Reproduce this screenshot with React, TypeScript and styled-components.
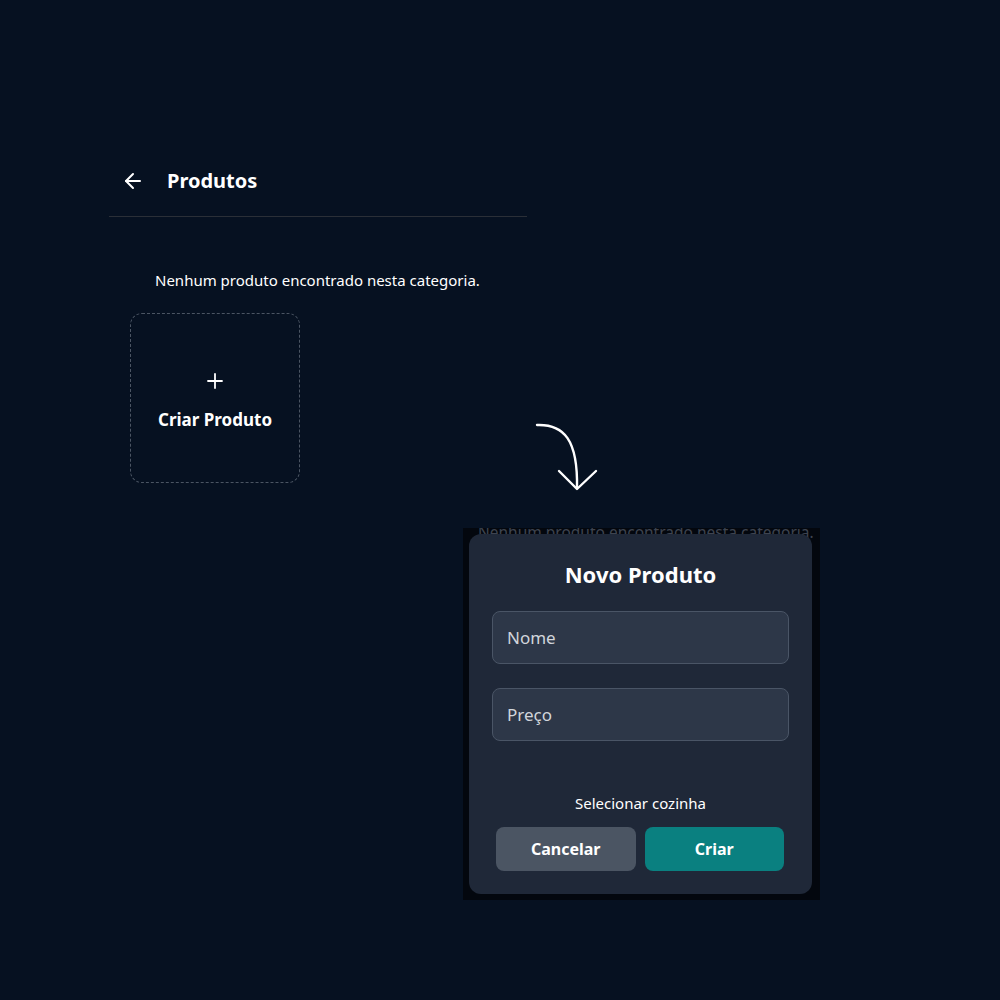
import { createGlobalStyle, styled } from 'styled-components'
import { ArrowLeft, Plus } from 'lucide-react'

const GlobalStyle = createGlobalStyle`
  html, body {
    margin: 0;
    padding: 0;
    background: #061121;
    font-family: "Noto Sans", "Open Sans", sans-serif;
    color: #ffffff;
  }
`

const Canvas = styled.div`
  position: relative;
  width: 1000px;
  height: 1000px;
  padding-top: 145px;
  box-sizing: border-box;
  overflow: hidden;
`

const Panel = styled.section`
  width: 418px;
  margin-left: 109px;
`

const Header = styled.header`
  display: flex;
  align-items: center;
  gap: 22px;
  height: 71px;
  padding-left: 12px;
  border-bottom: 1px solid #2a2f37;
`

const Title = styled.h1`
  margin: 0;
  font-size: 20px;
  font-weight: 700;
`

const Content = styled.div`
  display: flex;
  flex-direction: column;
  gap: 23px;
  padding: 53px 0 0 21px;
`

const Message = styled.p`
  margin: 0 0 0 25px;
  font-size: 15px;
  line-height: 20px;
`

const NewCard = styled.button`
  display: flex;
  flex-direction: column;
  align-items: center;
  justify-content: center;
  gap: 15px;
  width: 170px;
  height: 170px;
  padding: 3px 0 0;
  background: transparent;
  border: 1px dashed #4b5563;
  border-radius: 12px;
  color: #ffffff;
  font-family: inherit;
  font-size: 17px;
  font-weight: 700;
`

const CurvedArrow = styled.svg`
  position: absolute;
  left: 530px;
  top: 418px;
`

const Shot = styled.div`
  position: relative;
  width: 357px;
  height: 372px;
  margin: 45px 0 0 463px;
  padding: 6px 8px 6px 6px;
  box-sizing: border-box;
  background: #03070e;
  overflow: hidden;
`

const Behind = styled.p`
  position: absolute;
  top: -6px;
  left: 15px;
  margin: 0;
  white-space: nowrap;
  font-size: 15.5px;
  line-height: 20px;
  color: #3e4450;
`

const Modal = styled.div`
  position: relative;
  display: flex;
  flex-direction: column;
  height: 360px;
  padding: 26px 23px 23px;
  box-sizing: border-box;
  background: #1f2838;
  border-radius: 12px;
`

const ModalTitle = styled.h2`
  margin: 0 0 23px;
  text-align: center;
  font-size: 22px;
  line-height: 28px;
  font-weight: 700;
`

const Field = styled.div`
  display: flex;
  align-items: center;
  height: 53px;
  padding: 0 14px;
  margin-bottom: ${p => p.$gap}px;
  box-sizing: border-box;
  background: #2d3748;
  border: 1px solid #4a5566;
  border-radius: 8px;
  color: #d1d5db;
  font-size: 17px;
`

const Select = styled.div`
  text-align: center;
  font-size: 15px;
  line-height: 20px;
  margin-bottom: 14px;
`

const Actions = styled.div`
  display: flex;
  gap: 9px;
  padding: 0 5px 0 4px;
`

const Button = styled.button`
  flex: 1;
  height: 44px;
  border: none;
  border-radius: 8px;
  background: ${p => (p.$primary ? '#0a8080' : '#4b5563')};
  color: #ffffff;
  font-family: inherit;
  font-size: 16px;
  font-weight: 700;
`

function App() {
  return (
    <Canvas>
      <GlobalStyle />
      <Panel>
        <Header>
          <ArrowLeft size={24} strokeWidth={2} color="#ffffff" />
          <Title>Produtos</Title>
        </Header>
        <Content>
          <Message>Nenhum produto encontrado nesta categoria.</Message>
          <NewCard>
            <Plus size={24} strokeWidth={1.8} />
            Criar Produto
          </NewCard>
        </Content>
      </Panel>

      <CurvedArrow width="80" height="80" viewBox="0 0 80 80" fill="none" stroke="#ffffff" strokeWidth="2.4" strokeLinecap="round" strokeLinejoin="round">
        <path d="M7 7 C 34 6, 48 22, 47 70" />
        <path d="M29 53 L47 71 L66 53" />
      </CurvedArrow>

      <Shot>
        <Behind>Nenhum produto encontrado nesta categoria.</Behind>
        <Modal>
          <ModalTitle>Novo Produto</ModalTitle>
          <Field $gap={24}>Nome</Field>
          <Field $gap={52}>Preço</Field>
          <Select>Selecionar cozinha</Select>
          <Actions>
            <Button>Cancelar</Button>
            <Button $primary>Criar</Button>
          </Actions>
        </Modal>
      </Shot>
    </Canvas>
  )
}

export default App
